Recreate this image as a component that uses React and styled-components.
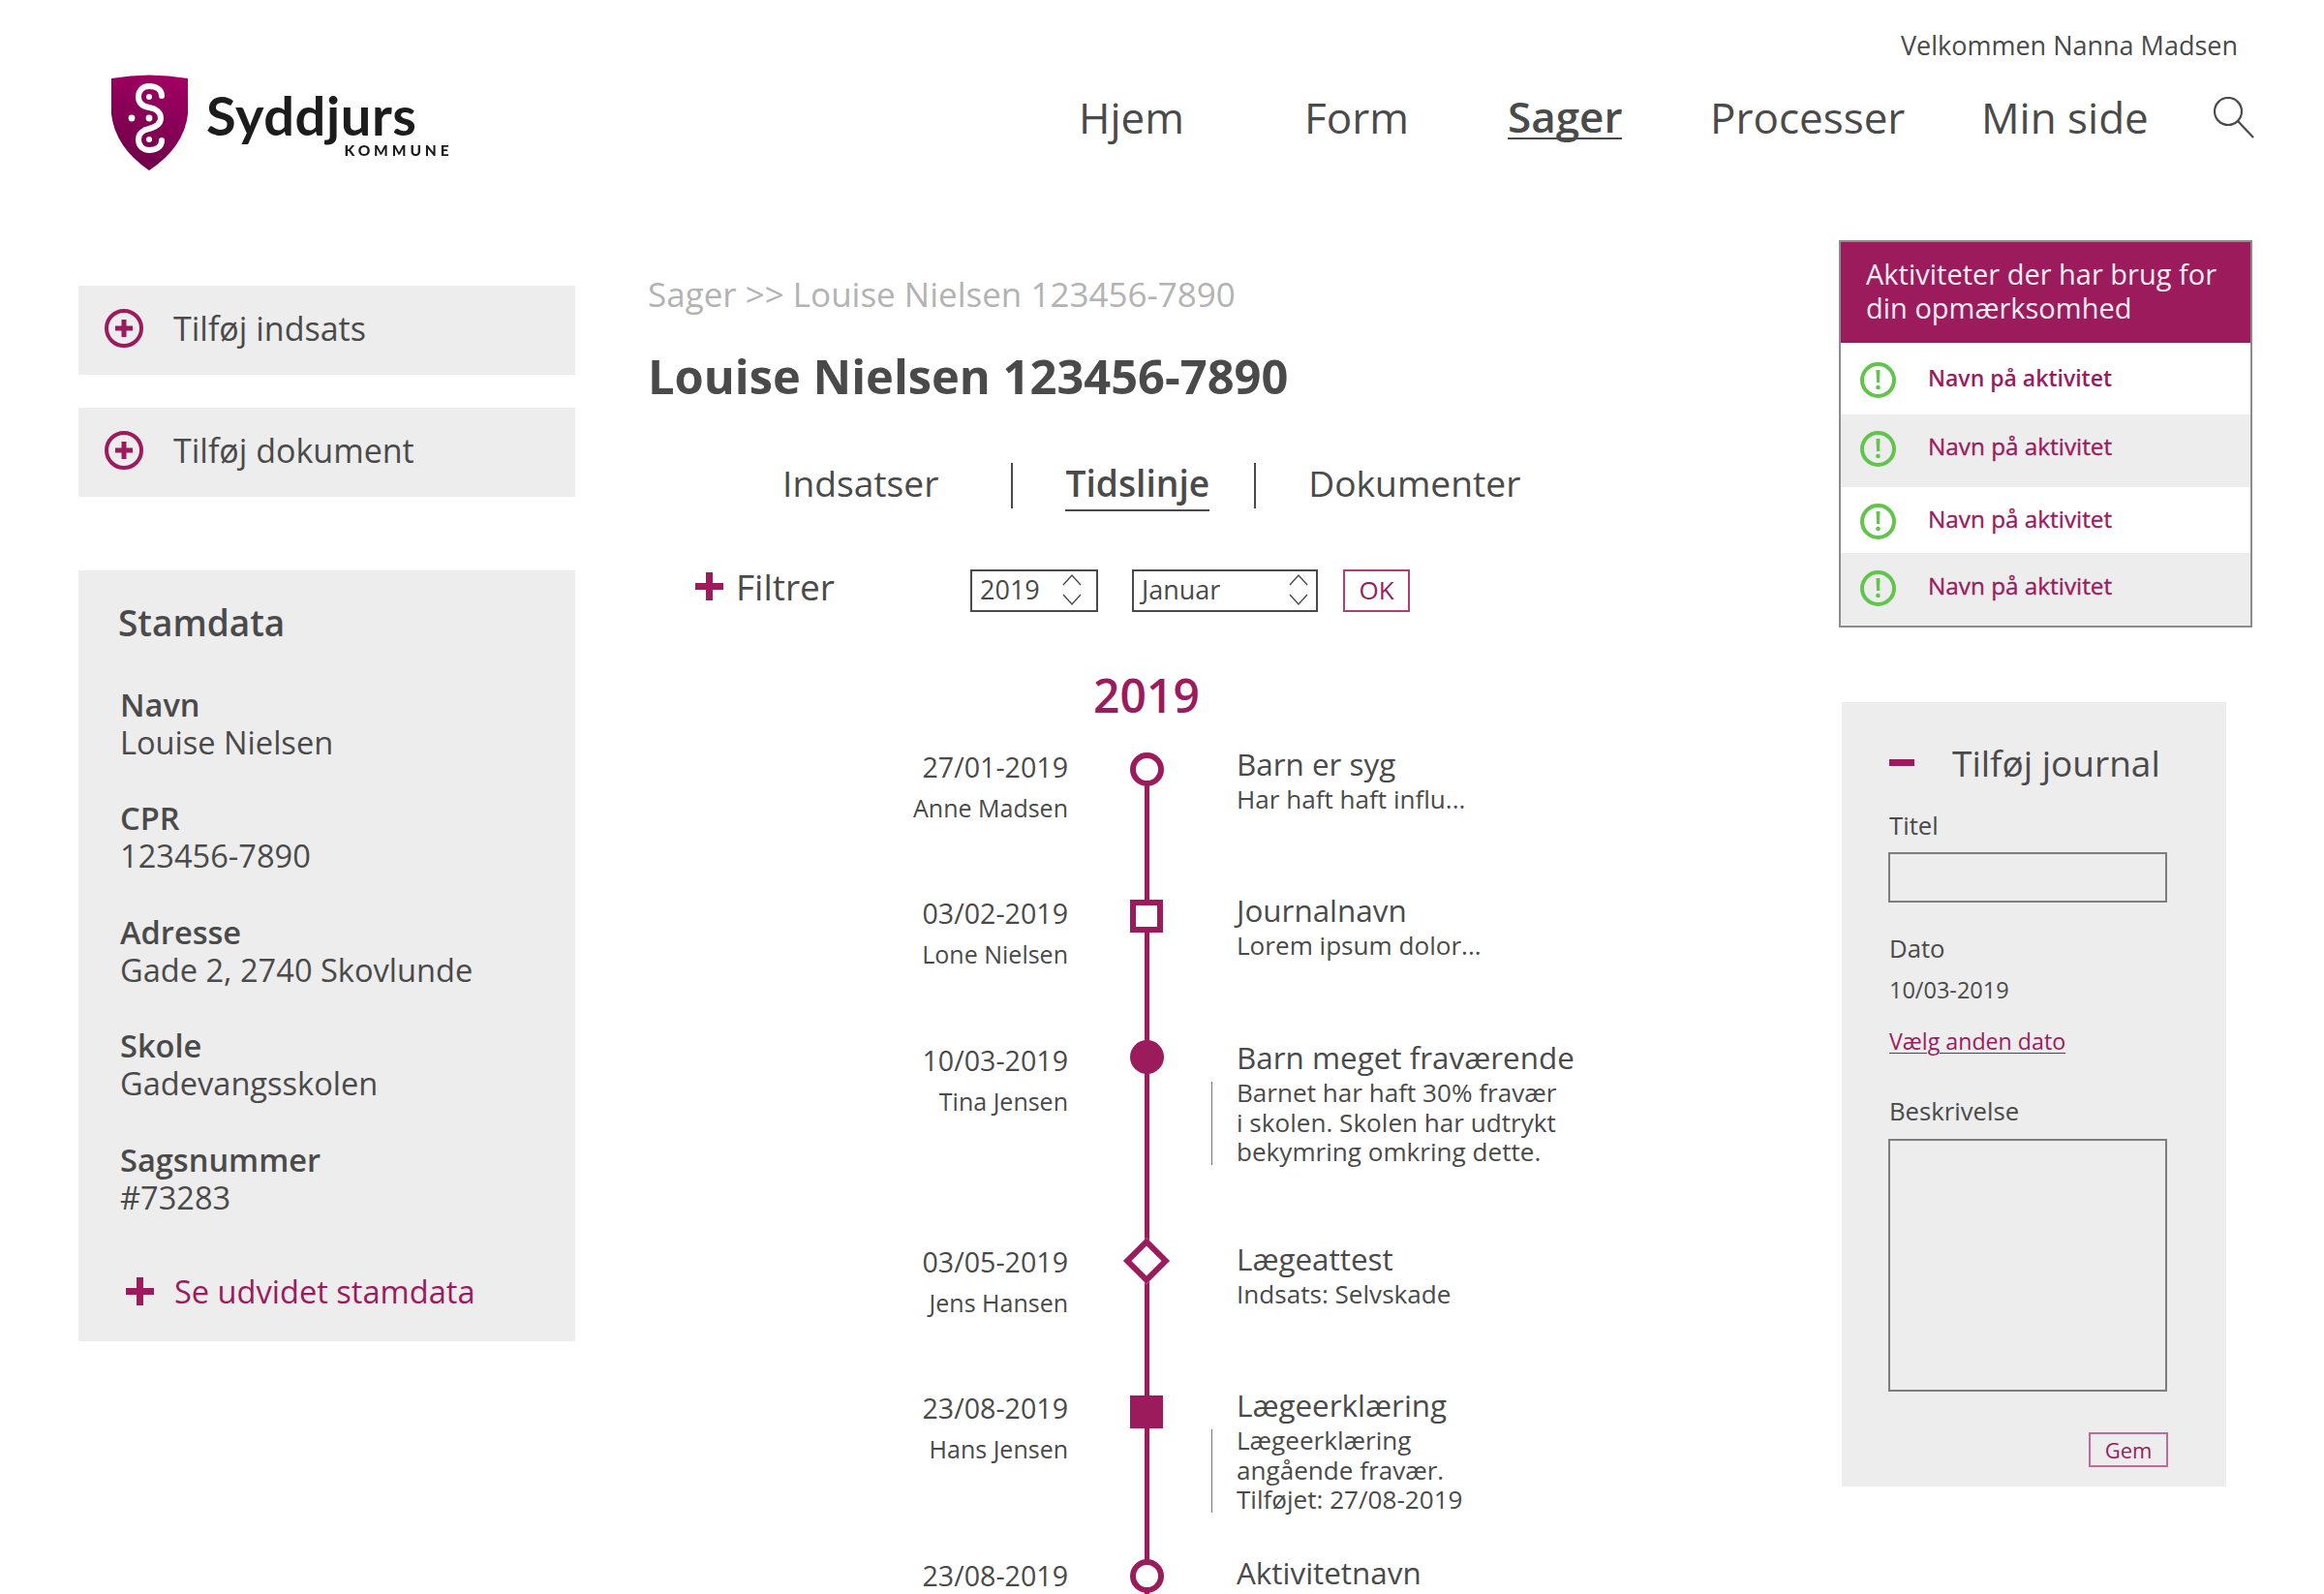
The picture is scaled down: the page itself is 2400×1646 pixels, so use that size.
import React from "react";
import styled, { createGlobalStyle, css } from "styled-components";

const PURPLE = "#9b1b5d";
const INK = "#4a4a4a";
const PANEL = "#ededed";

const Global = createGlobalStyle`
  html, body { margin: 0; padding: 0; height: 1646px; overflow: hidden; background: #fff; }
  * { box-sizing: border-box; }
  body { font-family: "Open Sans", "Noto Sans", sans-serif; color: ${INK}; }
`;

const Page = styled.div`
  width: 2400px;
  height: 1646px;
  overflow: hidden;
`;

const Header = styled.header`
  height: 248px;
  display: flex;
  padding: 0 72px 0 114px;
  position: relative;
`;

const Logo = styled.div`
  display: flex;
  align-items: flex-start;
  padding-top: 76px;
  width: 1000px;
  filter: blur(0.35px);
`;

const LogoWords = styled.div`
  margin-left: 18px;
  padding-top: 15px;
  display: flex;
  flex-direction: column;
  align-items: flex-end;
  color: #1c1c1c;
`;

const LogoName = styled.span`
  font-family: "Lato", sans-serif;
  font-weight: 700;
  font-size: 56px;
  line-height: 56px;
  letter-spacing: 0.6px;
  margin-right: 37px;
`;

const LogoSub = styled.span`
  font-family: "Lato", sans-serif;
  font-weight: 900;
  font-size: 15.5px;
  line-height: 14px;
  letter-spacing: 3.9px;
  margin-top: 1px;
`;

const Welcome = styled.div`
  position: absolute;
  right: 89px;
  top: 28px;
  font-size: 27px;
  line-height: 38px;
`;

const Nav = styled.nav`
  display: grid;
  grid-template-columns: 233px 210px 209px 280px 240px 42px;
  align-items: center;
  height: 48px;
  margin-top: 98px;
`;

const NavLink = styled.a`
  font-size: 44px;
  line-height: 46px;
  margin-top: -3px;
  font-weight: ${(p) => (p.$active ? 600 : 400)};
  color: ${INK};
  justify-self: start;
  ${(p) =>
    p.$active &&
    css`
      border-bottom: 2px solid ${INK};
      line-height: 44px;
    `}
`;

const Main = styled.main`
  display: grid;
  grid-template-columns: 513px 1fr 427px;
  column-gap: 75px;
  padding: 0 74px 0 81px;
`;

const LeftCol = styled.aside`
  padding-top: 47px;
  display: flex;
  flex-direction: column;
`;

const AddButton = styled.div`
  height: 92px;
  background: ${PANEL};
  display: flex;
  align-items: center;
  padding: 0 0 4px 27px;
  margin-bottom: 34px;
  font-size: 34px;
  gap: 31px;
`;

const Stamdata = styled.section`
  margin-top: 42px;
  background: ${PANEL};
  padding: 29px 41px 26px 41px;
`;

const StamHeading = styled.h2`
  margin: 0 0 41px 0;
  font-size: 37px;
  line-height: 50px;
  font-weight: 600;
`;

const Field = styled.div`
  height: 76px;
  margin: 0 0 41.4px 2px;
  font-size: 32.6px;
  line-height: 38px;
`;

const FieldLabel = styled.div`
  font-weight: 600;
`;

const FieldValue = styled.div`
  margin-top: 1px;
`;

const MoreLink = styled.a`
  display: flex;
  align-items: center;
  gap: 21px;
  margin: 54px 0 0 8px;
  font-size: 32.6px;
  line-height: 50px;
  color: ${PURPLE};
`;

const MidCol = styled.div`
  padding-top: 31px;
`;

const Crumb = styled.div`
  font-size: 35px;
  line-height: 50px;
  color: #b3b3b3;
`;

const Title = styled.h1`
  margin: 25px 0 0;
  font-size: 48.8px;
  line-height: 68px;
  font-weight: 700;
`;

const Tabs = styled.div`
  display: flex;
  height: 48px;
  margin-top: 53px;
  padding-left: 139px;
  font-size: 37.2px;
  line-height: 48px;
`;

const Tab = styled.div`
  font-weight: ${(p) => (p.$active ? 600 : 400)};
  height: 53px;
  ${(p) => p.$active && css`border-bottom: 2px solid ${INK};`}
`;

const TabSep = styled.span`
  width: 2px;
  height: 47px;
  margin: 3px ${(p) => p.$right}px 0 ${(p) => p.$left}px;
  background: ${INK};
`;

const FilterRow = styled.div`
  display: flex;
  align-items: center;
  height: 44px;
  margin: 65px 0 0 49px;
`;

const FilterLabel = styled.div`
  display: flex;
  align-items: center;
  gap: 13px;
  width: 284px;
  font-size: 37px;
  margin-top: -9px;
`;

const SelectBox = styled.div`
  width: ${(p) => p.$w}px;
  height: 44px;
  margin-right: ${(p) => p.$gap}px;
  border: 2px solid ${INK};
  padding: 0 ${(p) => p.$pad}px 3px 8px;
  display: flex;
  align-items: center;
  justify-content: space-between;
  font-size: 27px;
`;

const OkButton = styled.button`
  width: 69px;
  height: 44px;
  padding: 0 0 3px;
  background: #fff;
  border: 2px solid #b03c7a;
  color: ${PURPLE};
  font: 400 26px "Open Sans", sans-serif;
`;

const TimelineSection = styled.section`
  margin: 56px 0 0 134px;
`;

const Year = styled.div`
  width: 762px;
  text-align: center;
  font-size: 48px;
  line-height: 60px;
  font-weight: 600;
  color: ${PURPLE};
`;

const Rows = styled.div`
  position: relative;
  margin-top: 22px;
  &::before {
    content: "";
    position: absolute;
    left: 379px;
    top: 20px;
    bottom: 0;
    width: 5px;
    background: ${PURPLE};
  }
`;

const Row = styled.article`
  display: grid;
  grid-template-columns: 300px 162px 1fr;
  height: ${(p) => p.$h}px;
`;

const When = styled.div`
  text-align: right;
  padding-top: 2px;
`;

const WhenDate = styled.div`
  font-size: 28.6px;
  line-height: 40px;
`;

const WhenWho = styled.div`
  font-size: 25px;
  line-height: 40px;
  margin-top: 2px;
`;

const MarkerCell = styled.div`
  display: flex;
  justify-content: center;
  position: relative;
  z-index: 1;
`;

const markerKinds = {
  ring: css`
    width: 35px;
    height: 35px;
    border-radius: 50%;
    border: 6px solid ${PURPLE};
    background: #fff;
  `,
  dot: css`
    width: 35px;
    height: 35px;
    border-radius: 50%;
    background: ${PURPLE};
  `,
  box: css`
    width: 34px;
    height: 34px;
    border: 6px solid ${PURPLE};
    background: #fff;
  `,
  block: css`
    width: 34px;
    height: 34px;
    background: ${PURPLE};
  `,
  diamond: css`
    width: 34px;
    height: 34px;
    border: 6px solid ${PURPLE};
    background: #fff;
    transform: rotate(45deg);
  `,
};

const Marker = styled.div`
  margin-top: ${(p) => p.$top}px;
  ${(p) => markerKinds[p.$kind]}
`;

const Body = styled.div`
  padding-left: 12px;
`;

const BodyTitle = styled.div`
  font-size: 31.4px;
  line-height: 40px;
  margin-top: -1px;
`;

const BodyText = styled.div`
  position: relative;
  margin-top: 1px;
  font-size: 26.1px;
  line-height: 30.5px;
  white-space: pre-line;
  ${(p) =>
    p.$ruled &&
    css`
      &::before {
        content: "";
        position: absolute;
        left: -26px;
        top: 4px;
        bottom: 2px;
        width: 1px;
        background: #777;
      }
    `}
`;

const RightCol = styled.aside``;

const AlertPanel = styled.section`
  border: 2px solid #8c8c8c;
  height: 400px;
  display: flex;
  flex-direction: column;
`;

const AlertHead = styled.div`
  height: 104px;
  background: ${PURPLE};
  color: #f4eef1;
  font-size: 29px;
  line-height: 35px;
  padding: 15px 20px 0 26px;
`;

const AlertRow = styled.div`
  flex: ${(p) => (p.$strong ? "0 0 74px" : "1")};
  display: flex;
  align-items: center;
  padding: 3px 0 ${(p) => (p.$shaded ? 6 : 0)}px 20px;
  gap: 33px;
  background: ${(p) => (p.$shaded ? PANEL : "#fff")};
  color: ${PURPLE};
  font-size: ${(p) => (p.$strong ? 23 : 24.3)}px;
  font-weight: ${(p) => (p.$strong ? 600 : 400)};
  -webkit-text-stroke: ${(p) => (p.$strong ? 0 : 0.35)}px ${PURPLE};
`;

const AlertName = styled.span`
  margin-top: -6px;
`;

const Journal = styled.section`
  width: 397px;
  margin: 77px 0 0 3px;
  background: ${PANEL};
  padding: 38px 60px 20px 49px;
  display: flex;
  flex-direction: column;
`;

const JournalHead = styled.div`
  display: flex;
  align-items: center;
  gap: 39px;
  font-size: 37px;
  line-height: 50px;
  height: 50px;
`;

const Minus = styled.span`
  width: 26px;
  height: 7px;
  margin-top: -1px;
  background: ${PURPLE};
`;

const JLabel = styled.label`
  font-size: 25.7px;
  line-height: 36px;
  margin-top: ${(p) => p.$mt}px;
`;

const JInput = styled.input`
  width: 288px;
  height: 52px;
  margin: 9px 0 0 -1px;
  background: transparent;
  border: 2px solid #7d7d7d;
  display: block;
`;

const JArea = styled.textarea`
  width: 288px;
  height: 261px;
  margin: 10px 0 0 -1px;
  background: transparent;
  border: 2px solid #7d7d7d;
  display: block;
  resize: none;
`;

const JDate = styled.div`
  font-size: 23.5px;
  line-height: 36px;
  margin-top: 6px;
`;

const JLink = styled.a`
  font-size: 23.2px;
  line-height: 36px;
  margin-top: 17px;
  color: ${PURPLE};
  text-decoration: underline;
  text-underline-offset: 3px;
  text-decoration-thickness: 1px;
`;

const Save = styled.button`
  align-self: flex-end;
  width: 82px;
  height: 36px;
  margin-top: 42px;
  padding: 0;
  background: transparent;
  border: 2px solid #c06a98;
  color: ${PURPLE};
  font: 400 22px "Open Sans", sans-serif;
`;

const Shield = () => (
  <svg width="81" height="100" viewBox="0 0 81 100">
    <defs>
      <linearGradient id="sg" x1="0.7" y1="0" x2="0.4" y2="1">
        <stop offset="0" stopColor="#a00062" />
        <stop offset="1" stopColor="#6e0049" />
      </linearGradient>
    </defs>
    <path d="M1 5 Q40 -2 80 5 L80 42 Q76 76 40 100 Q5 76 1 42 Z" fill="url(#sg)" />
    <path
      d="M53 23 C53 16 47 13 40 13 C33 13 29 18 29 24 C29 31 34 34 40 35 C47 36 52 40 52 46 C52 52 47 55 40 57 C34 58 29 62 29 68 C29 75 34 79 40 79 C47 79 53 76 53 69"
      fill="none"
      stroke="#fff"
      strokeWidth="6"
      strokeLinecap="round"
    />
    <circle cx="40" cy="24" r="3" fill="#fff" />
    <circle cx="40" cy="68" r="3" fill="#fff" />
    <circle cx="40" cy="46" r="3.4" fill="#fff" />
    <circle cx="22" cy="46" r="3.4" fill="#fff" />
  </svg>
);

const SearchIcon = () => (
  <svg width="42" height="44" viewBox="0 0 42 44" fill="none" stroke={INK} strokeWidth="2.2">
    <circle cx="15" cy="15" r="14" />
    <path d="M25 25 L41 42" />
  </svg>
);

const PlusCircle = () => (
  <svg width="40" height="40" viewBox="0 0 40 40" fill="none" stroke={PURPLE}>
    <circle cx="20" cy="20" r="18" strokeWidth="4" />
    <path d="M20 11 V29 M11 20 H29" strokeWidth="5" />
  </svg>
);

const Plus = () => (
  <svg width="29" height="29" viewBox="0 0 29 29" fill={PURPLE}>
    <path d="M11 0 H18 V11 H29 V18 H18 V29 H11 V18 H0 V11 H11 Z" />
  </svg>
);

const Spinner = () => (
  <svg width="22" height="34" viewBox="0 0 22 34" fill="none" stroke={INK} strokeWidth="1.4">
    <path d="M2 12 L11 2 L20 12 M2 22 L11 32 L20 22" />
  </svg>
);

const Alert = () => (
  <svg width="37" height="37" viewBox="0 0 37 37">
    <circle cx="18.5" cy="18.5" r="16.5" fill="none" stroke="#62c44c" strokeWidth="4" />
    <path d="M16.5 8 H20.5 L20 21 H17 Z" fill="#62c44c" />
    <circle cx="18.5" cy="26" r="2.3" fill="#62c44c" />
  </svg>
);

const fields = [
  ["Navn", "Louise Nielsen"],
  ["CPR", "123456-7890"],
  ["Adresse", "Gade 2, 2740 Skovlunde"],
  ["Skole", "Gadevangsskolen"],
  ["Sagsnummer", "#73283"],
];

const events = [
  { h: 151, kind: "ring", top: 7, date: "27/01-2019", who: "Anne Madsen", title: "Barn er syg", text: "Har haft haft influ..." },
  { h: 152, kind: "box", top: 8, date: "03/02-2019", who: "Lone Nielsen", title: "Journalnavn", text: "Lorem ipsum dolor..." },
  { h: 208, kind: "dot", top: 1, date: "10/03-2019", who: "Tina Jensen", title: "Barn meget fraværende", text: "Barnet har haft 30% fravær\ni skolen. Skolen har udtrykt\nbekymring omkring dette.", ruled: true },
  { h: 151, kind: "diamond", top: 4, date: "03/05-2019", who: "Jens Hansen", title: "Lægeattest", text: "Indsats: Selvskade" },
  { h: 173, kind: "block", top: 9, date: "23/08-2019", who: "Hans Jensen", title: "Lægeerklæring", text: "Lægeerklæring\nangående fravær.\nTilføjet: 27/08-2019", ruled: true },
  { h: 100, kind: "ring", top: 5, date: "23/08-2019", title: "Aktivitetnavn" },
];

export default function App() {
  return (
    <Page>
      <Global />
      <Header>
        <Logo>
          <Shield />
          <LogoWords>
            <LogoName>Syddjurs</LogoName>
            <LogoSub>KOMMUNE</LogoSub>
          </LogoWords>
        </Logo>
        <Welcome>Velkommen Nanna Madsen</Welcome>
        <Nav>
          <NavLink>Hjem</NavLink>
          <NavLink>Form</NavLink>
          <NavLink $active>Sager</NavLink>
          <NavLink>Processer</NavLink>
          <NavLink>Min side</NavLink>
          <SearchIcon />
        </Nav>
      </Header>
      <Main>
        <LeftCol>
          <AddButton><PlusCircle />Tilføj indsats</AddButton>
          <AddButton><PlusCircle />Tilføj dokument</AddButton>
          <Stamdata>
            <StamHeading>Stamdata</StamHeading>
            {fields.map(([label, value]) => (
              <Field key={label}>
                <FieldLabel>{label}</FieldLabel>
                <FieldValue>{value}</FieldValue>
              </Field>
            ))}
            <MoreLink><Plus />Se udvidet stamdata</MoreLink>
          </Stamdata>
        </LeftCol>
        <MidCol>
          <Crumb>Sager &gt;&gt; Louise Nielsen 123456-7890</Crumb>
          <Title>Louise Nielsen 123456-7890</Title>
          <Tabs>
            <Tab>Indsatser</Tab>
            <TabSep $left={75} $right={54} />
            <Tab $active>Tidslinje</Tab>
            <TabSep $left={46} $right={54} />
            <Tab>Dokumenter</Tab>
          </Tabs>
          <FilterRow>
            <FilterLabel><Plus />Filtrer</FilterLabel>
            <SelectBox $w={132} $gap={35} $pad={14}>2019<Spinner /></SelectBox>
            <SelectBox $w={192} $gap={26} $pad={7}>Januar<Spinner /></SelectBox>
            <OkButton>OK</OkButton>
          </FilterRow>
          <TimelineSection>
            <Year>2019</Year>
            <Rows>
              {events.map((e, i) => (
                <Row key={i} $h={e.h}>
                  <When>
                    <WhenDate>{e.date}</WhenDate>
                    {e.who && <WhenWho>{e.who}</WhenWho>}
                  </When>
                  <MarkerCell><Marker $kind={e.kind} $top={e.top} /></MarkerCell>
                  <Body>
                    <BodyTitle>{e.title}</BodyTitle>
                    {e.text && <BodyText $ruled={e.ruled}>{e.text}</BodyText>}
                  </Body>
                </Row>
              ))}
            </Rows>
          </TimelineSection>
        </MidCol>
        <RightCol>
          <AlertPanel>
            <AlertHead>Aktiviteter der har brug for din opmærksomhed</AlertHead>
            <AlertRow $strong><Alert /><AlertName>Navn på aktivitet</AlertName></AlertRow>
            <AlertRow $shaded><Alert /><AlertName>Navn på aktivitet</AlertName></AlertRow>
            <AlertRow><Alert /><AlertName>Navn på aktivitet</AlertName></AlertRow>
            <AlertRow $shaded><Alert /><AlertName>Navn på aktivitet</AlertName></AlertRow>
          </AlertPanel>
          <Journal>
            <JournalHead><Minus />Tilføj journal</JournalHead>
            <JLabel $mt={22}>Titel</JLabel>
            <JInput />
            <JLabel $mt={30}>Dato</JLabel>
            <JDate>10/03-2019</JDate>
            <JLink>Vælg anden dato</JLink>
            <JLabel $mt={37}>Beskrivelse</JLabel>
            <JArea />
            <Save>Gem</Save>
          </Journal>
        </RightCol>
      </Main>
    </Page>
  );
}
